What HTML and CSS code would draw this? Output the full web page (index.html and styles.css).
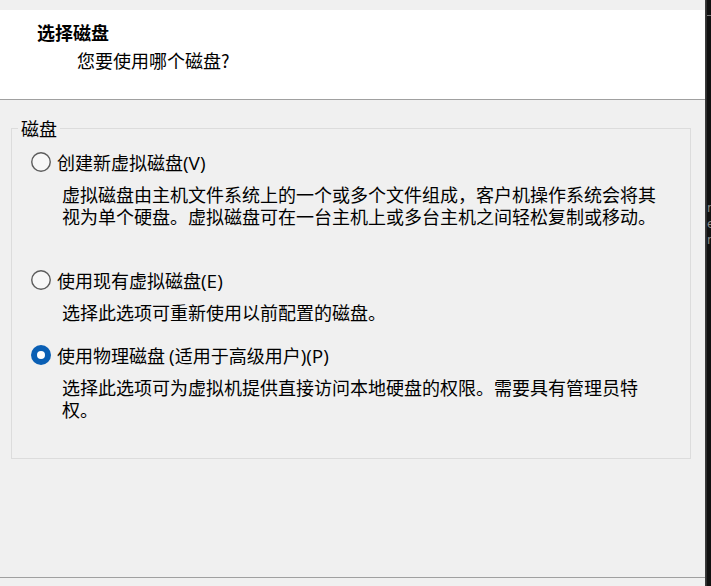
FILE: index.html
```html
<!DOCTYPE html>
<html lang="zh-CN">
<head>
<meta charset="utf-8">
<title>选择磁盘</title>
<link rel="stylesheet" href="styles.css">
</head>
<body>
<div class="screen">
  <div class="window">
    <header class="header">
      <h1 class="title">选择磁盘</h1>
      <p class="subtitle">您要使用哪个磁盘?</p>
    </header>
    <fieldset class="group">
      <legend class="legend">磁盘</legend>
      <div class="option">
        <div class="option-row">
          <svg class="radio" width="20" height="20" viewBox="0 0 20 20"><circle cx="10" cy="10" r="9.25" fill="#f7f7f7" stroke="#5c5c5c" stroke-width="1.4"/></svg>
          <span class="label">创建新虚拟磁盘<span class="latin">(V)</span></span>
        </div>
        <p class="desc desc-tall">虚拟磁盘由主机文件系统上的一个或多个文件组成，客户机操作系统会将其视为单个硬盘。虚拟磁盘可在一台主机上或多台主机之间轻松复制或移动。</p>
      </div>
      <div class="option">
        <div class="option-row">
          <svg class="radio" width="20" height="20" viewBox="0 0 20 20"><circle cx="10" cy="10" r="9.25" fill="#f7f7f7" stroke="#5c5c5c" stroke-width="1.4"/></svg>
          <span class="label">使用现有虚拟磁盘<span class="latin">(E)</span></span>
        </div>
        <p class="desc">选择此选项可重新使用以前配置的磁盘。</p>
      </div>
      <div class="option option-last">
        <div class="option-row">
          <svg class="radio" width="20" height="20" viewBox="0 0 20 20"><circle cx="10" cy="10" r="10" fill="#0a5fb4"/><circle cx="10" cy="10" r="4" fill="#ffffff"/></svg>
          <span class="label">使用物理磁盘 <span class="latin">(</span>适用于高级用户<span class="latin">)(P)</span></span>
        </div>
        <p class="desc">选择此选项可为虚拟机提供直接访问本地硬盘的权限。需要具有管理员特权。</p>
      </div>
    </fieldset>
    <div class="spacer"></div>
    <footer class="footer"></footer>
  </div>
  <div class="edge">
    <span class="edge-line"></span>
    <span class="edge-text">r</span>
    <span class="edge-text">e</span>
    <span class="edge-text">r</span>
  </div>
</div>
</body>
</html>
```

FILE: styles.css
```css
html, body {
  margin: 0;
  padding: 0;
  width: 711px;
  height: 586px;
  overflow: hidden;
  background: #121212;
}

.screen {
  display: flex;
  width: 711px;
  height: 586px;
}

.window {
  width: 705px;
  height: 586px;
  background: #f0f0f0;
  display: flex;
  flex-direction: column;
  font-family: "Noto Sans CJK SC", "Noto Sans", sans-serif;
  color: #000;
  border-right: 1px solid #3a3a3a;
}

.header {
  margin-top: 10px;
  background: #ffffff;
  border-bottom: 1px solid #a0a0a0;
  padding: 11px 0 0 37px;
  box-sizing: border-box;
  height: 90px;
}

.title {
  margin: 0;
  font-size: 18px;
  line-height: 22px;
  font-weight: 700;
}

.subtitle {
  margin: 6px 0 0 40px;
  font-size: 18px;
  line-height: 22px;
  font-weight: 400;
}

.group {
  margin: 17px 0 0 11px;
  width: 680px;
  box-sizing: border-box;
  border: 1px solid #dcdcdc;
  padding: 12px 0 38px 0;
  min-width: 0;
}

.legend {
  margin-left: 6px;
  padding: 0 3px;
  font-size: 18px;
  line-height: 22px;
}

.option {
  margin-left: 19px;
}

.option + .option {
  margin-top: 20px;
}

.option-last {
  margin-top: 21px !important;
}

.option-row {
  display: flex;
  align-items: center;
  height: 22px;
}

.radio {
  flex: none;
  display: block;
}

.label {
  margin-left: 6px;
  font-size: 18px;
  line-height: 22px;
  white-space: nowrap;
}

.latin {
  font-family: "Open Sans", "Noto Sans", sans-serif;
  font-size: 19px;
}

.desc {
  margin: 10px 0 0 31px;
  width: 610px;
  font-size: 18px;
  line-height: 22px;
}

.desc-tall {
  min-height: 66px;
}

.spacer {
  flex: 1;
}

.footer {
  height: 8px;
  border-top: 1px solid #a0a0a0;
  background: #f0f0f0;
}

.edge {
  flex: 1;
  display: flex;
  flex-direction: column;
  overflow: hidden;
  background: #111111;
  border-left: 1px solid #2e2e2e;
}

.edge-line {
  display: block;
  height: 1px;
  margin-top: 15px;
  background: #777777;
  margin-bottom: 184px;
}

.edge-text {
  display: block;
  font-family: "DejaVu Sans", sans-serif;
  font-size: 12px;
  line-height: 16px;
  color: #8a8a8a;
}
```
